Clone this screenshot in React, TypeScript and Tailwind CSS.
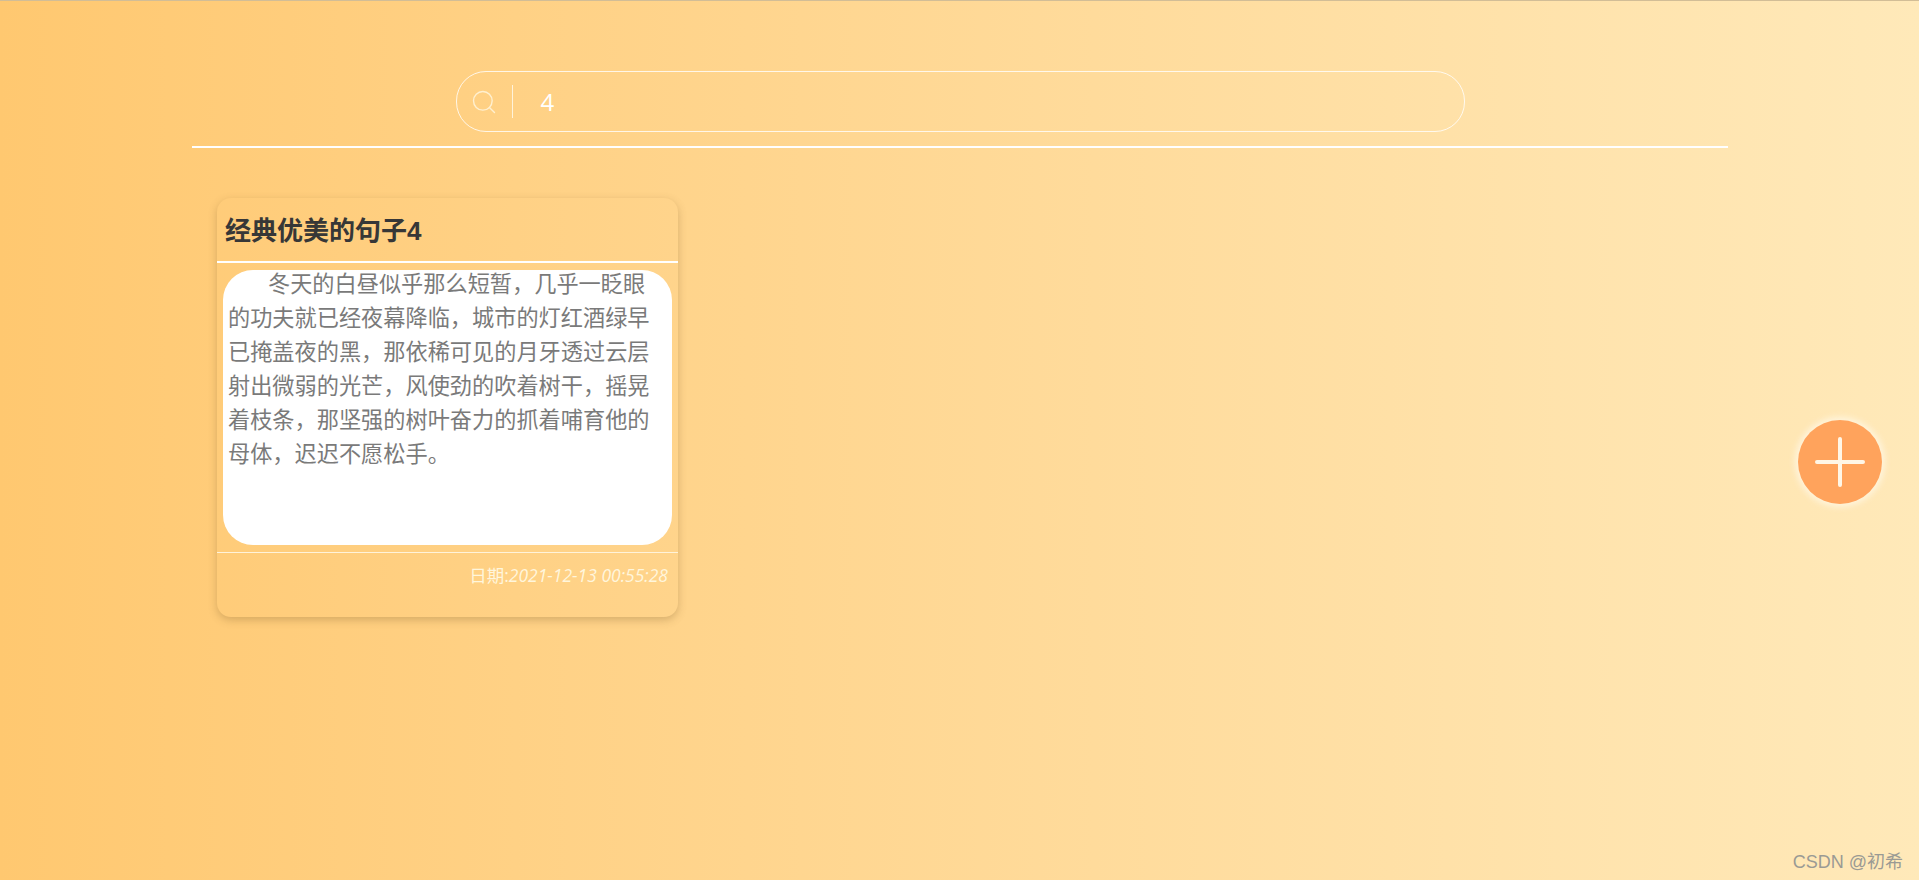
import { Search } from "lucide-react";

const App = () => {
  return (
    <div className="relative h-[880px] w-full overflow-hidden border-t border-[#d2bd96] bg-gradient-to-r from-[#ffc870] to-[#ffe9b9] font-['Open_Sans','Noto_Sans_CJK_SC',sans-serif]">
      <div className="ml-[192px] w-[1536px]">
        {/* Search */}
        <div className="flex h-[147px] justify-center border-b-2 border-white pt-[70px]">
          <div className="flex h-[61px] w-[1009px] items-center rounded-[30px] border border-white/80 pl-[13px]">
            <Search className="h-[28px] w-[28px] text-[#fff0d0]" strokeWidth={1.2} />
            <div className="ml-[14px] h-[33px] w-px bg-[#fff3da]" />
            <span className="ml-[28px] text-[24px] font-medium leading-none text-white">4</span>
          </div>
        </div>

        {/* Card */}
        <div className="ml-[25px] mt-[50px] h-[419px] w-[461px] rounded-[14px] shadow-[0_3px_8px_rgba(120,90,40,0.3)]">
          <h2 className="flex h-[65px] items-center border-b-2 border-white pl-[8px] pt-[4px] font-['Liberation_Sans','Noto_Sans_CJK_SC',sans-serif] text-[26px] font-bold text-[#373737]">
            经典优美的句子4
          </h2>
          <div className="mx-[6px] mt-[7px] h-[275px] rounded-[30px] bg-white pl-[5px] pr-[10px]">
            <p className="-translate-y-[3px] text-[22.2px] leading-[34px] text-[#7a7a7a] [text-indent:40px]">
              冬天的白昼似乎那么短暂，几乎一眨眼的功夫就已经夜幕降临，城市的灯红酒绿早已掩盖夜的黑，那依稀可见的月牙透过云层射出微弱的光芒，风使劲的吹着树干，摇晃着枝条，那坚强的树叶奋力的抓着哺育他的母体，迟迟不愿松手。
            </p>
          </div>
          <div className="mt-[7px] border-t border-[#fff3da] pr-[10px] pt-[10px] text-right text-[17.5px] italic leading-[24px] text-[#fff6dc]">
            <span className="not-italic">日期:</span>2021-12-13 00:55:28
          </div>
        </div>
      </div>

      {/* Add button */}
      <button className="absolute left-[1798px] top-[419px] flex h-[84px] w-[84px] items-center justify-center rounded-full bg-[#ffa35c] shadow-[0_0_6px_3px_rgba(255,248,230,0.8)]">
        <svg width="50" height="50" viewBox="0 0 50 50" fill="none" stroke="#fff6e6" strokeWidth="4" strokeLinecap="round">
          <path d="M25 2v46M2 25h46" />
        </svg>
      </button>

      {/* Watermark */}
      <div className="absolute bottom-[7px] right-[16px] font-['Liberation_Sans','Noto_Sans_CJK_SC',sans-serif] text-[18px] leading-[22px] text-[#9a9a94]">
        CSDN @初希
      </div>
    </div>
  );
};

export default App;
